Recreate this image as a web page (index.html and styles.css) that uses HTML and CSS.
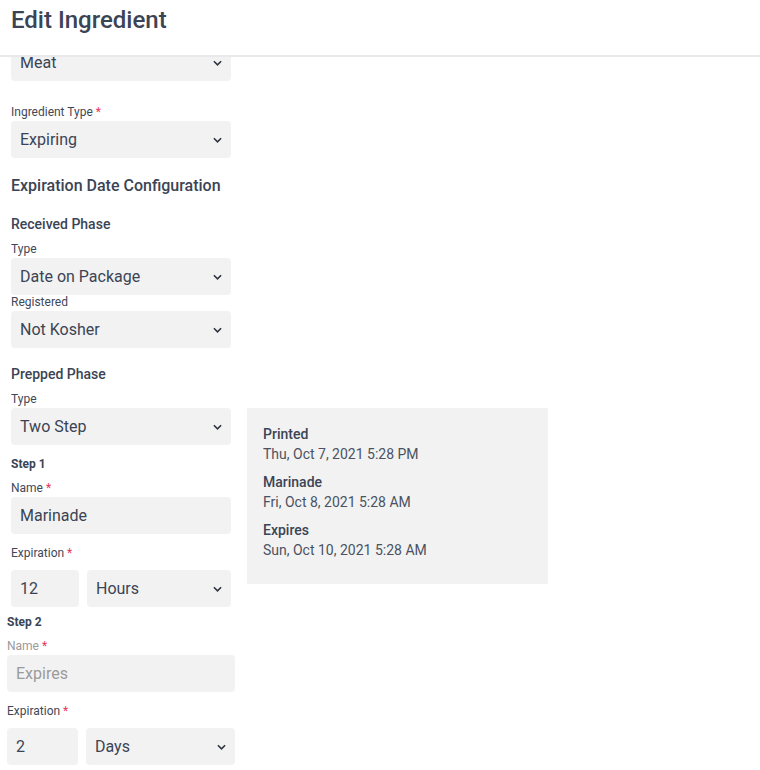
FILE: index.html
```html
<!DOCTYPE html>
<html lang="en">
<head>
    <meta charset="UTF-8">
    <meta name="viewport" content="width=device-width, initial-scale=1.0">
    <title>Edit Ingredient</title>
    <link rel="stylesheet" href="styles.css">
</head>
<body>
    <header class="top">
        <h1>Edit Ingredient</h1>
    </header>

    <main class="content">
        <div class="field first">
            <div class="select">Meat <svg class="chev" viewBox="0 0 10 6"><path d="M1 1l4 4 4-4"/></svg></div>
        </div>

        <div class="field gap-top">
            <label>Ingredient Type <span class="req">*</span></label>
            <div class="select">Expiring <svg class="chev" viewBox="0 0 10 6"><path d="M1 1l4 4 4-4"/></svg></div>
        </div>

        <h2>Expiration Date Configuration</h2>

        <h3>Received Phase</h3>
        <div class="field">
            <label>Type</label>
            <div class="select">Date on Package <svg class="chev" viewBox="0 0 10 6"><path d="M1 1l4 4 4-4"/></svg></div>
        </div>
        <div class="field">
            <label>Registered</label>
            <div class="select">Not Kosher <svg class="chev" viewBox="0 0 10 6"><path d="M1 1l4 4 4-4"/></svg></div>
        </div>

        <h3 class="prepped">Prepped Phase</h3>
        <label>Type</label>
        <div class="phase">
            <div class="steps">
                <div class="select">Two Step <svg class="chev" viewBox="0 0 10 6"><path d="M1 1l4 4 4-4"/></svg></div>

                <div class="step">
                    <h4>Step 1</h4>
                    <label>Name <span class="req">*</span></label>
                    <div class="input">Marinade</div>
                    <label class="exp-label">Expiration <span class="req">*</span></label>
                    <div class="row">
                        <div class="input num">12</div>
                        <div class="select">Hours <svg class="chev" viewBox="0 0 10 6"><path d="M1 1l4 4 4-4"/></svg></div>
                    </div>
                </div>

                <div class="step wide">
                    <h4>Step 2</h4>
                    <label class="muted">Name <span class="req">*</span></label>
                    <div class="input disabled">Expires</div>
                    <label class="exp-label">Expiration <span class="req">*</span></label>
                    <div class="row">
                        <div class="input num">2</div>
                        <div class="select">Days <svg class="chev" viewBox="0 0 10 6"><path d="M1 1l4 4 4-4"/></svg></div>
                    </div>
                </div>
            </div>

            <aside class="preview">
                <div class="item">
                    <div class="item-title">Printed</div>
                    <div class="item-value">Thu, Oct 7, 2021 5:28 PM</div>
                </div>
                <div class="item">
                    <div class="item-title">Marinade</div>
                    <div class="item-value">Fri, Oct 8, 2021 5:28 AM</div>
                </div>
                <div class="item">
                    <div class="item-title">Expires</div>
                    <div class="item-value">Sun, Oct 10, 2021 5:28 AM</div>
                </div>
            </aside>
        </div>
    </main>
</body>
</html>
```

FILE: styles.css
```css
body {
    margin: 0;
    font-family: Roboto, "Liberation Sans", sans-serif;
    color: #3b4455;
    background: #fff;
    height: 770px;
    overflow: hidden;
}
.top {
    height: 57px;
    border-bottom: 2px solid #e8e8ed;
    box-sizing: border-box;
    background: #fff;
    position: relative;
    z-index: 2;
}
.top h1 {
    margin: 0;
    padding: 4px 11px 0;
    font-size: 24px;
    font-weight: 500;
    line-height: 32px;
}
.content {
    padding: 0 11px;
    width: 537px;
}
.field.first {
    margin-top: -13px;
}
.field.gap-top {
    margin-top: 24px;
}
label {
    display: block;
    font-size: 12px;
    line-height: 14px;
    margin-bottom: 2px;
    color: #3f4858;
}
.req {
    color: #e8345a;
}
.select, .input {
    box-sizing: border-box;
    height: 37px;
    width: 220px;
    background: #f2f2f2;
    border-radius: 4px;
    padding: 0 9px;
    font-size: 16px;
    line-height: 37px;
    color: #3b4455;
    position: relative;
}
.chev {
    position: absolute;
    right: 9px;
    top: 16px;
    width: 9px;
    height: 6px;
    fill: none;
    stroke: #2f3540;
    stroke-width: 1.8;
}
h2 {
    margin: 19px 0 21px;
    font-size: 16px;
    font-weight: 500;
    line-height: 18px;
}
h3 {
    margin: 0 0 10px;
    font-size: 14px;
    font-weight: 500;
    line-height: 16px;
}
h3.prepped {
    margin-top: 18px;
}
.phase {
    display: flex;
    gap: 16px;
    align-items: flex-start;
}
.steps {
    width: 220px;
}
h4 {
    margin: 12px 0 10px;
    font-size: 12px;
    font-weight: 700;
    line-height: 14px;
}
.exp-label {
    margin-top: 12px;
    margin-bottom: 10px;
}
.row {
    display: flex;
    gap: 8px;
}
.row .num {
    width: 68px;
}
.row .select {
    flex: 1;
    width: auto;
}
.step.wide {
    margin: 0 -4px;
}
.step.wide h4 {
    margin-top: 8px;
}
.step.wide .input {
    width: 228px;
}
.step.wide .row .input.num {
    width: 71px;
}
.muted {
    color: #9a9a9a;
}
.input.disabled {
    color: #9b9b9b;
}
.preview {
    box-sizing: border-box;
    width: 301px;
    height: 176px;
    background: #f2f2f2;
    padding: 16px 16px;
    font-size: 14px;
    line-height: 20px;
}
.item {
    margin-bottom: 8px;
}
.item-title {
    font-weight: 500;
    color: #3b4455;
}
.item-value {
    color: #4a5262;
}
```
